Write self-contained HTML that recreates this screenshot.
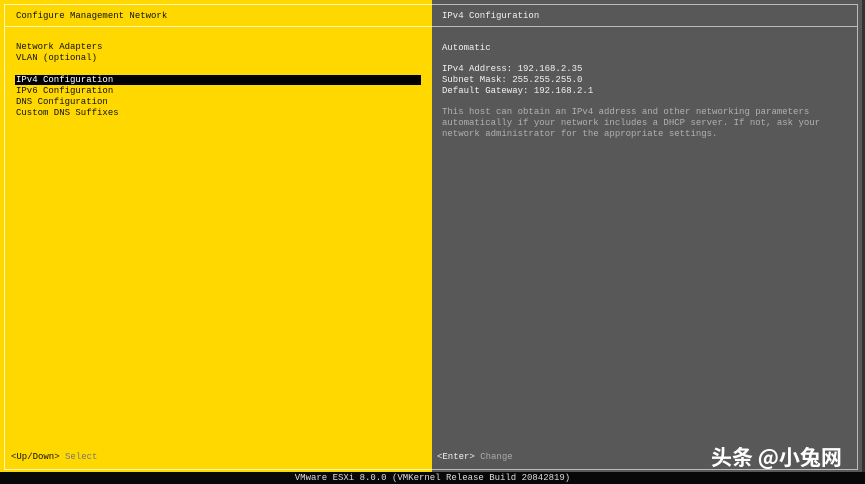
<!DOCTYPE html>
<html><head><meta charset="utf-8"><style>
*{margin:0;padding:0;box-sizing:border-box}
body{width:865px;height:484px;overflow:hidden;background:#000;position:relative;font-family:"Liberation Mono",monospace;font-size:9px;line-height:11px}
.l{position:absolute;left:0;top:0;width:432px;height:472px;background:#ffd800}
.r{position:absolute;left:432px;top:0;width:430px;height:472px;background:#585858}
.edge{position:absolute;left:862px;top:0;width:3px;height:472px;background:#333}
.line{position:absolute;background:#fff6c0}
.rl{position:absolute;background:#bbb}
.t{position:absolute;white-space:pre}
.k{color:#111}
.w{color:#f0f0f0}
.g{color:#b0b0b0}
.sel{position:absolute;left:15px;top:75px;width:406px;height:10px;background:#000}
.bot{position:absolute;left:0;top:472px;width:865px;height:12px;background:#080808;color:#ddd;text-align:center;font-size:9px;line-height:12px}
</style></head><body>
<div class="l"></div><div class="r"></div><div class="edge"></div>
<div class="line" style="left:4px;top:4px;width:428px;height:1px"></div>
<div class="line" style="left:4px;top:4px;width:1px;height:466px"></div>
<div class="line" style="left:4px;top:26px;width:428px;height:1px"></div>
<div class="line" style="left:4px;top:469px;width:428px;height:1px"></div>
<div class="rl" style="left:432px;top:4px;width:426px;height:1px"></div>
<div class="rl" style="left:857px;top:4px;width:1px;height:466px"></div>
<div class="rl" style="left:432px;top:26px;width:426px;height:1px"></div>
<div class="rl" style="left:432px;top:469px;width:426px;height:1px"></div>
<div class="t k" style="left:16px;top:11px">Configure Management Network</div>
<div class="t k" style="left:16px;top:42px">Network Adapters
VLAN (optional)</div>
<div class="sel"></div>
<div class="t" style="left:16px;top:75px;color:#fff">IPv4 Configuration</div>
<div class="t k" style="left:16px;top:86px">IPv6 Configuration
DNS Configuration
Custom DNS Suffixes</div>
<div class="t w" style="left:442px;top:11px">IPv4 Configuration</div>
<div class="t w" style="left:442px;top:43px">Automatic</div>
<div class="t w" style="left:442px;top:64px">IPv4 Address: 192.168.2.35
Subnet Mask: 255.255.255.0
Default Gateway: 192.168.2.1</div>
<div class="t g" style="left:442px;top:107px">This host can obtain an IPv4 address and other networking parameters
automatically if your network includes a DHCP server. If not, ask your
network administrator for the appropriate settings.</div>
<div class="t k" style="left:11px;top:452px">&lt;Up/Down&gt; <span style="color:#777">Select</span></div>
<div class="t w" style="left:437px;top:452px">&lt;Enter&gt; <span style="color:#aaa">Change</span></div>
<div class="t" style="left:711px;top:443px;font-family:'Noto Sans CJK SC',sans-serif;font-size:21px;line-height:28px;color:#fff;font-weight:bold">头条 @小兔网</div>
<div class="bot">VMware ESXi 8.0.0 (VMKernel Release Build 20842819)</div>
</body></html>
